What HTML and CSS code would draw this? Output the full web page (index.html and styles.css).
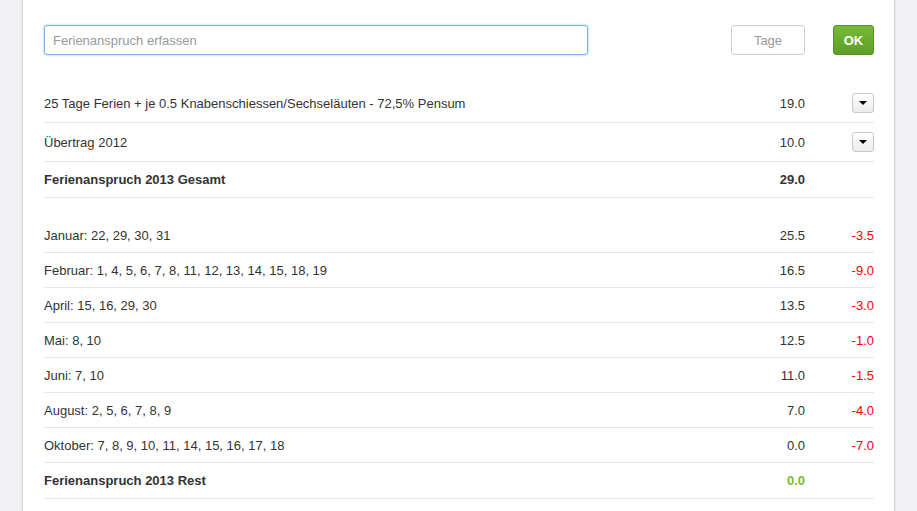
FILE: index.html
```
<!DOCTYPE html>
<html>
<head>
<meta charset="utf-8">
<title>Ferienanspruch</title>
<link rel="stylesheet" href="styles.css">
</head>
<body>
<div class="panel">
    <div class="toolbar">
        <input type="text" class="entry" placeholder="Ferienanspruch erfassen">
        <button class="btn tage">Tage</button>
        <button class="btn ok">OK</button>
    </div>

    <div class="list first">
        <div class="row tall">
            <div class="label">25 Tage Ferien + je 0.5 Knabenschiessen/Sechseläuten - 72,5% Pensum</div>
            <div class="value">19.0</div>
            <div class="extra"><span class="caret-btn"><span class="caret"></span></span></div>
        </div>
        <div class="row tall">
            <div class="label">Übertrag 2012</div>
            <div class="value">10.0</div>
            <div class="extra"><span class="caret-btn"><span class="caret"></span></span></div>
        </div>
        <div class="row total">
            <div class="label">Ferienanspruch 2013 Gesamt</div>
            <div class="value">29.0</div>
            <div class="extra"></div>
        </div>
    </div>

    <div class="list second">
        <div class="row">
            <div class="label">Januar: 22, 29, 30, 31</div>
            <div class="value">25.5</div>
            <div class="extra minus">-3.5</div>
        </div>
        <div class="row">
            <div class="label">Februar: 1, 4, 5, 6, 7, 8, 11, 12, 13, 14, 15, 18, 19</div>
            <div class="value">16.5</div>
            <div class="extra minus">-9.0</div>
        </div>
        <div class="row">
            <div class="label">April: 15, 16, 29, 30</div>
            <div class="value">13.5</div>
            <div class="extra minus">-3.0</div>
        </div>
        <div class="row">
            <div class="label">Mai: 8, 10</div>
            <div class="value">12.5</div>
            <div class="extra minus">-1.0</div>
        </div>
        <div class="row">
            <div class="label">Juni: 7, 10</div>
            <div class="value">11.0</div>
            <div class="extra minus">-1.5</div>
        </div>
        <div class="row">
            <div class="label">August: 2, 5, 6, 7, 8, 9</div>
            <div class="value">7.0</div>
            <div class="extra minus">-4.0</div>
        </div>
        <div class="row">
            <div class="label">Oktober: 7, 8, 9, 10, 11, 14, 15, 16, 17, 18</div>
            <div class="value">0.0</div>
            <div class="extra minus">-7.0</div>
        </div>
        <div class="row total">
            <div class="label">Ferienanspruch 2013 Rest</div>
            <div class="value rest">0.0</div>
            <div class="extra"></div>
        </div>
    </div>
</div>
</body>
</html>
```

FILE: styles.css
```
html,body{height:100%;}
body{margin:0;background:#f2f2f4;font-family:"Liberation Sans",Arial,sans-serif;font-size:13px;color:#333;}
.panel{box-sizing:border-box;min-height:100%;margin:0 22px;padding:25px 20px 0 21px;background:#fff;border-left:1px solid #d6d6d6;border-right:1px solid #d6d6d6;box-shadow:0 0 2px rgba(0,0,0,.12);}

.toolbar{display:flex;align-items:center;height:30px;}
.entry{box-sizing:border-box;width:544px;height:30px;padding:0 8px;border:1px solid #74b6ec;border-radius:3px;box-shadow:0 0 3px rgba(82,168,236,.6);font-family:inherit;font-size:13px;color:#333;outline:none;}
.entry::placeholder{color:#999;}
.btn{box-sizing:border-box;height:30px;border-radius:3px;font-family:inherit;font-size:13px;cursor:pointer;}
.tage{width:74px;margin-left:auto;background:#fff;border:1px solid #ccc;color:#999;}
.ok{width:41px;margin-left:28px;background:linear-gradient(#76b93a,#5e9f25);border:1px solid #57941f;color:#fff;font-weight:bold;}

.list.first{margin-top:29px;}
.list.second{margin-top:20px;}
.row{display:flex;align-items:center;height:34px;border-bottom:1px solid #e6e6e6;}
.row.tall{height:38px;}
.row.total{height:35px;font-weight:bold;}
.label{flex:1;}
.value{width:80px;text-align:right;}
.extra{width:69px;display:flex;justify-content:flex-end;}
.minus{color:#f00;}
.rest{color:#7cb92b;}

.caret-btn{box-sizing:border-box;display:flex;align-items:center;justify-content:center;width:22px;height:20px;border:1px solid #c8c8c8;border-radius:3px;background:linear-gradient(#fff,#ececec);}
.caret{width:0;height:0;border-left:4px solid transparent;border-right:4px solid transparent;border-top:4px solid #000;}
```
